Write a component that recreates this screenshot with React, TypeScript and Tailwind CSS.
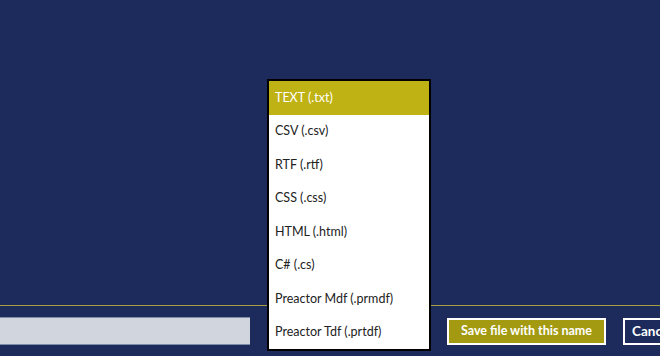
const formats = [
  "TEXT (.txt)",
  "CSV (.csv)",
  "RTF (.rtf)",
  "CSS (.css)",
  "HTML (.html)",
  "C# (.cs)",
  "Preactor Mdf (.prmdf)",
  "Preactor Tdf (.prtdf)",
];

export default function App() {
  const selected = 0;

  return (
    <div className="relative h-[356px] w-[660px] overflow-hidden bg-[#1d2b5c] font-['Lato','Liberation_Sans',sans-serif]">
      {/* page body */}
      <div className="h-[305px]" />

      {/* bottom bar */}
      <div className="border-t border-[#a8a03a]">
        <div className="flex items-start pt-[11px]">
          <div className="h-[28px] w-[250px] shrink-0 border-y border-[#7d8aa8] bg-[#d1d5de]" />
          <button className="ml-[197px] mt-px h-[27px] w-[159px] shrink-0 whitespace-nowrap border-2 border-white bg-[#a39a12] text-[12.5px] font-bold text-white">
            Save file with this name
          </button>
          <button className="ml-[17px] mt-px h-[27px] w-[90px] shrink-0 whitespace-nowrap border-2 border-white px-[7px] text-left text-[13.5px] font-bold text-white">
            Cancel
          </button>
        </div>
      </div>

      {/* format dropdown */}
      <div className="absolute left-[267px] top-[79px] w-[164px] border-2 border-black bg-white">
        {formats.map((f, i) => (
          <div
            key={f}
            className={`flex h-[33.5px] items-center pl-[6px] pt-px text-[12.5px] ${
              i === selected ? "bg-[#bfb214] text-white" : "text-[#222]"
            }`}
          >
            {f}
          </div>
        ))}
      </div>
    </div>
  );
}
